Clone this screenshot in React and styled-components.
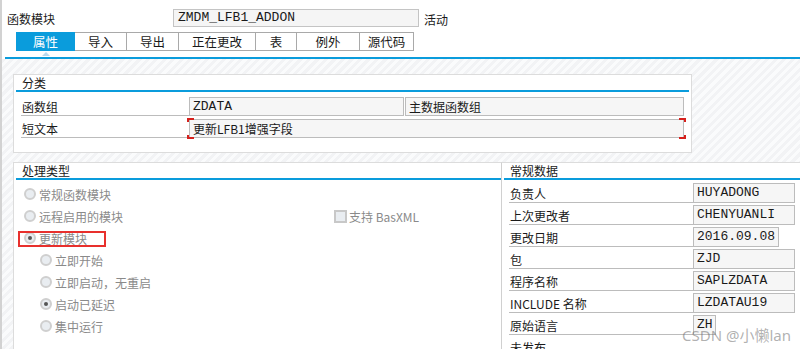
import React from "react";
import styled, { createGlobalStyle } from "styled-components";

const GlobalStyle = createGlobalStyle`
  html, body {
    margin: 0;
    padding: 0;
    background: #ffffff;
  }
  * {
    box-sizing: border-box;
  }
`;

const cjk = `"Noto Sans CJK SC", "Noto Sans", sans-serif`;
const mono = `"Liberation Mono", "Noto Sans CJK SC", monospace`;
const blue = "#0a9cdc";

const tabs = ["属性", "导入", "导出", "正在更改", "表", "例外", "源代码"];
const tabWidths = [59, 53, 53, 78, 42, 64, 55];

const general = [
  { label: "负责人", value: "HUYADONG", w: 102 },
  { label: "上次更改者", value: "CHENYUANLI", w: 102 },
  { label: "更改日期", value: "2016.09.08", w: 86 },
  { label: "包", value: "ZJD", w: 102 },
  { label: "程序名称", value: "SAPLZDATA", w: 102 },
  { label: "INCLUDE 名称", value: "LZDATAU19", w: 102 },
  { label: "原始语言", value: "ZH", w: 23 },
  { label: "未发布", value: null },
];

function App() {
  return (
    <>
      <GlobalStyle />
      <Page>
        <Header>
          <HeaderLabel>函数模块</HeaderLabel>
          <HeaderField>ZMDM_LFB1_ADDON</HeaderField>
          <Status>活动</Status>
        </Header>

        <TabStrip>
          {tabs.map((t, i) => (
            <Tab key={t} $active={i === 0} $w={tabWidths[i]} $first={i === 0}>
              {t}
            </Tab>
          ))}
        </TabStrip>
        <TabLine />

        <Body>
          <Group>
            <GroupTitle>分类</GroupTitle>
            <FormRow>
              <RowLabel $w={168}>函数组</RowLabel>
              <Field $w={215} $h={19}>ZDATA</Field>
              <Field $w={279} $h={19} $gap={1} $cjk>
                主数据函数组
              </Field>
            </FormRow>
            <FormRow>
              <RowLabel $w={168}>短文本</RowLabel>
              <Field $w={495} $h={19} $cjk $required>
                更新LFB1增强字段
              </Field>
            </FormRow>
          </Group>

          <Split>
            <LeftPanel>
              <PanelTitle>处理类型</PanelTitle>
              <RadioList>
                <RadioRow>
                  <Option>
                    <Radio />
                    常规函数模块
                  </Option>
                </RadioRow>
                <RadioRow>
                  <Option $w={310}>
                    <Radio />
                    远程启用的模块
                  </Option>
                  <Option>
                    <Checkbox />
                    支持 BasXML
                  </Option>
                </RadioRow>
                <RadioRow>
                  <Option>
                    <Radio $checked />
                    更新模块
                  </Option>
                  <Highlight />
                </RadioRow>
                <RadioRow $sub>
                  <Option>
                    <Radio />
                    立即开始
                  </Option>
                </RadioRow>
                <RadioRow $sub>
                  <Option>
                    <Radio />
                    立即启动，无重启
                  </Option>
                </RadioRow>
                <RadioRow $sub>
                  <Option>
                    <Radio $checked />
                    启动已延迟
                  </Option>
                </RadioRow>
                <RadioRow $sub>
                  <Option>
                    <Radio />
                    集中运行
                  </Option>
                </RadioRow>
              </RadioList>
            </LeftPanel>

            <RightPanel>
              <PanelTitle>常规数据</PanelTitle>
              <DataList>
                {general.map((row) => (
                  <DataRow key={row.label}>
                    <RowLabel $w={184}>{row.label}</RowLabel>
                    {row.value && (
                      <Field $w={row.w} $h={20}>
                        {row.value}
                      </Field>
                    )}
                  </DataRow>
                ))}
              </DataList>
            </RightPanel>
          </Split>
        </Body>

        <Watermark>CSDN @小懒lan</Watermark>
      </Page>
    </>
  );
}

export default App;

const Page = styled.div`
  position: relative;
  width: 800px;
  height: 349px;
  overflow: hidden;
  border-left: 2px solid #d2d2d2;
  background: #ffffff;
  display: flex;
  flex-direction: column;
  font-family: ${cjk};
  font-size: 12px;
  color: #1a1a1a;
`;

const Header = styled.div`
  display: flex;
  align-items: center;
  flex-shrink: 0;
  height: 32px;
  padding: 4px 0 0 5px;
`;

const HeaderLabel = styled.div`
  width: 166px;
  font-size: 12px;
  line-height: 18px;
  padding-top: 2px;
`;

const HeaderField = styled.div`
  width: 246px;
  height: 18px;
  border: 1px solid #c4c4c4;
  background: #f5f5f5;
  font-family: ${mono};
  font-size: 13px;
  line-height: 16px;
  padding-left: 4px;
`;

const Status = styled.div`
  margin-left: 5px;
  font-size: 12px;
  padding-top: 2px;
`;

const TabStrip = styled.div`
  display: flex;
  flex-shrink: 0;
  height: 25px;
  padding-left: 14px;
`;

const Tab = styled.div`
  position: relative;
  width: ${(p) => p.$w}px;
  height: 19px;
  margin-left: ${(p) => (p.$first ? 0 : -1)}px;
  display: flex;
  align-items: center;
  justify-content: center;
  font-size: 12.5px;
  background: ${(p) => (p.$active ? blue : "#ffffff")};
  color: ${(p) => (p.$active ? "#ffffff" : "#1a1a1a")};
  border: 1px solid ${(p) => (p.$active ? blue : "#a9a9a9")};
  z-index: ${(p) => (p.$active ? 1 : 0)};

  &::after {
    content: "";
    display: ${(p) => (p.$active ? "block" : "none")};
    position: absolute;
    left: 50%;
    bottom: -6px;
    margin-left: -4px;
    width: 0;
    height: 0;
    border-left: 4px solid transparent;
    border-right: 4px solid transparent;
    border-bottom: 4px solid #b8d8ec;
  }
`;

const TabLine = styled.div`
  flex-shrink: 0;
  height: 2px;
  margin-left: 3px;
  background: ${blue};
`;

const Body = styled.div`
  flex: 1;
  min-height: 0;
  overflow: hidden;
  padding: 15px 0 0 11px;
  background: repeating-linear-gradient(
    135deg,
    #f2f3f5 0px,
    #f2f3f5 3px,
    #fafbfc 3px,
    #fafbfc 6px
  );
`;

const Group = styled.div`
  width: 679px;
  height: 79px;
  border: 1px solid #dcdcdc;
  background: #ffffff;
  padding: 0 2px;
`;

const GroupTitle = styled.div`
  height: 17px;
  padding-left: 6px;
  line-height: 15px;
  font-size: 12px;
  border-bottom: 2px solid ${blue};
  margin-bottom: 2px;
`;

const FormRow = styled.div`
  display: flex;
  align-items: flex-end;
  height: 22px;
  padding-left: 5px;
`;

const RowLabel = styled.div`
  width: ${(p) => p.$w}px;
  height: 100%;
  flex-shrink: 0;
  padding: 5px 0 0 1px;
  border-bottom: 1px solid #bcbcbc;
  font-size: 12px;
  line-height: 15px;
  white-space: nowrap;
`;

const Field = styled.div`
  position: relative;
  width: ${(p) => p.$w}px;
  height: ${(p) => p.$h}px;
  margin-left: ${(p) => p.$gap || 0}px;
  flex-shrink: 0;
  border: 1px solid #bcbcbc;
  background: #f6f6f6;
  padding-left: 3px;
  font-family: ${(p) => (p.$cjk ? cjk : mono)};
  font-size: ${(p) => (p.$cjk ? 12 : 13)}px;
  line-height: ${(p) => p.$h - 2}px;
  white-space: nowrap;

  &::before,
  &::after {
    content: "";
    display: ${(p) => (p.$required ? "block" : "none")};
    position: absolute;
    width: 5px;
    top: -2px;
    bottom: -2px;
    pointer-events: none;
    -webkit-mask: linear-gradient(#000 0 4px, transparent 4px calc(100% - 4px), #000 calc(100% - 4px));
    mask: linear-gradient(#000 0 4px, transparent 4px calc(100% - 4px), #000 calc(100% - 4px));
  }

  &::before {
    left: -3px;
    border-left: 2px solid #d6201c;
    background:
      linear-gradient(#d6201c, #d6201c) top left / 5px 2px no-repeat,
      linear-gradient(#d6201c, #d6201c) bottom left / 5px 2px no-repeat;
  }

  &::after {
    right: -3px;
    border-right: 2px solid #d6201c;
    background:
      linear-gradient(#d6201c, #d6201c) top right / 5px 2px no-repeat,
      linear-gradient(#d6201c, #d6201c) bottom right / 5px 2px no-repeat;
  }
`;

const Split = styled.div`
  display: flex;
  margin-top: 9px;
  height: 200px;
`;

const LeftPanel = styled.div`
  width: 488px;
  border-top: 1px solid #dcdcdc;
  border-left: 1px solid #dcdcdc;
  background: #ffffff;
  padding: 0 0 0 2px;
`;

const RightPanel = styled.div`
  flex: 1;
  border-top: 1px solid #dcdcdc;
  border-left: 1px solid #d0d0d0;
  background: #ffffff;
  padding-left: 2px;
`;

const PanelTitle = styled.div`
  height: 17px;
  padding-left: 6px;
  line-height: 15px;
  font-size: 12px;
  border-bottom: 2px solid ${blue};
`;

const RadioList = styled.div`
  display: flex;
  flex-direction: column;
  padding-top: 3px;
`;

const RadioRow = styled.div`
  position: relative;
  display: flex;
  align-items: center;
  height: 22px;
  padding-left: ${(p) => (p.$sub ? 24 : 8)}px;
`;

const Option = styled.div`
  display: flex;
  align-items: center;
  width: ${(p) => (p.$w ? `${p.$w}px` : "auto")};
  color: #8a8a8a;
  font-size: 12px;
  white-space: nowrap;
`;

const Radio = styled.span`
  position: relative;
  width: 12px;
  height: 12px;
  margin-right: 3px;
  border-radius: 50%;
  border: 2px solid #cfcfcf;
  background: #e9edf1;

  &::after {
    content: "";
    display: ${(p) => (p.$checked ? "block" : "none")};
    position: absolute;
    left: 2px;
    top: 2px;
    width: 4px;
    height: 4px;
    border-radius: 50%;
    background: #555555;
  }
`;

const Checkbox = styled.span`
  width: 13px;
  height: 13px;
  margin-right: 2px;
  border: 2px solid #c8c8c8;
  background: #e9edf1;
`;

const Highlight = styled.div`
  position: absolute;
  left: 2px;
  top: 4px;
  width: 88px;
  height: 16px;
  border: 2px solid #e8302d;
`;

const DataList = styled.div`
  display: flex;
  flex-direction: column;
  padding-top: 1px;
`;

const DataRow = styled.div`
  display: flex;
  align-items: flex-end;
  height: 22px;
  padding-left: 5px;
`;

const Watermark = styled.div`
  position: absolute;
  left: 680px;
  top: 324px;
  font-family: "Noto Sans", "Noto Sans CJK SC", sans-serif;
  font-size: 15px;
  color: rgba(110, 110, 110, 0.55);
  white-space: nowrap;
`;
